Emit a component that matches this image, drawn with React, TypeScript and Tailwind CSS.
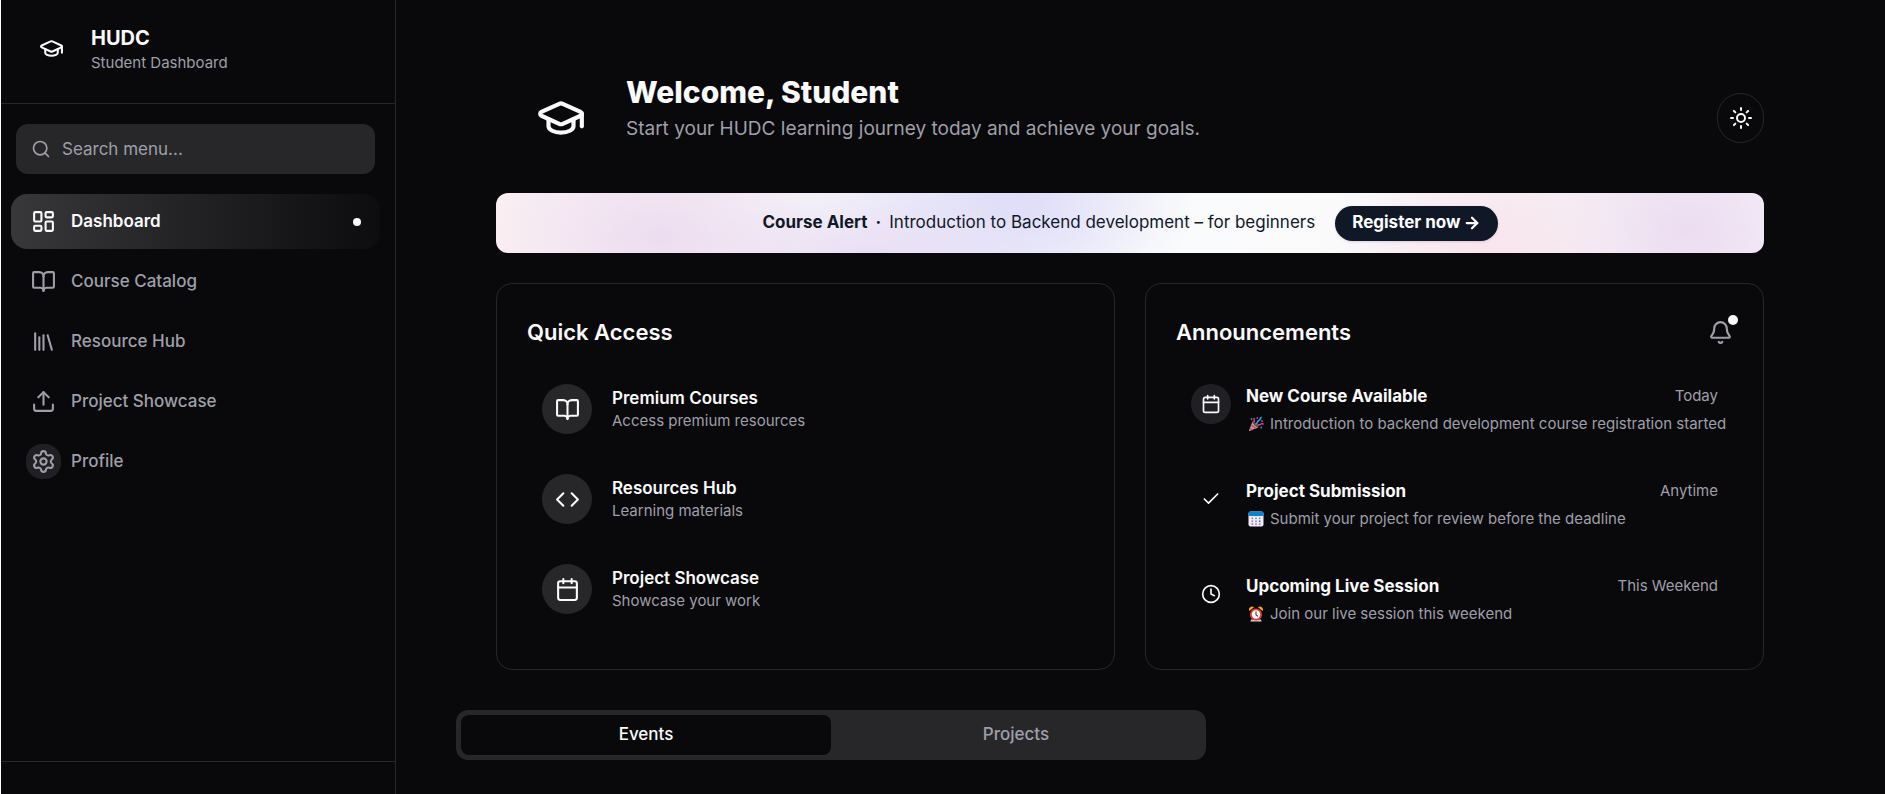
import type { ReactNode } from "react";
import {
  ArrowRight,
  Bell,
  BookOpen,
  Calendar,
  Check,
  Clock,
  Code,
  GraduationCap,
  LayoutDashboard,
  Library,
  Search,
  Settings,
  Sun,
  Upload,
} from "lucide-react";
import type { LucideIcon } from "lucide-react";

type NavItem = { label: string; icon: LucideIcon; active?: boolean; boxed?: boolean };

const navItems: NavItem[] = [
  { label: "Dashboard", icon: LayoutDashboard, active: true },
  { label: "Course Catalog", icon: BookOpen },
  { label: "Resource Hub", icon: Library },
  { label: "Project Showcase", icon: Upload },
  { label: "Profile", icon: Settings, boxed: true },
];

const quickLinks: { title: string; text: string; icon: LucideIcon }[] = [
  { title: "Premium Courses", text: "Access premium resources", icon: BookOpen },
  { title: "Resources Hub", text: "Learning materials", icon: Code },
  { title: "Project Showcase", text: "Showcase your work", icon: Calendar },
];

function PartyIcon() {
  return (
    <svg viewBox="0 0 16 16" className="size-4 shrink-0" role="img" aria-label="Party popper">
      <path d="M4.5 5.5 1 14.6c-.1.4.2.6.5.5l9-3.8z" fill="#e8a33d" />
      <path d="M3.6 8l5 4.2-1.8.8-4-3.3zM2.3 11.3l2.6 2.5-1.7.7-1.5-1.5z" fill="#8a5bd6" />
      <path d="M4.5 5.5c1-.8 6.5 4.3 6 5.8-1.7.6-6.6-4-6-5.8z" fill="#6b3d1f" />
      <path d="M8 8c2-1 1-3 2.8-3.5S12 2 13 1.5" fill="none" stroke="#1ba0e8" strokeWidth="1.8" strokeLinecap="round" />
      <path d="M9.5 9.5c1-1.5 2.3-.2 3.2-1.2s1.5-.5 2.3-.3" fill="none" stroke="#e0358c" strokeWidth="1.6" strokeLinecap="round" />
      <path d="M6 6c1-1.2-.5-2 .2-3.500" fill="none" stroke="#e0358c" strokeWidth="1.6" strokeLinecap="round" />
      <circle cx="3.5" cy="3" r=".9" fill="#1ba0e8" />
      <circle cx="9.3" cy="2" r=".9" fill="#e0358c" />
      <circle cx="14" cy="5" r=".9" fill="#e0358c" />
      <circle cx="13.2" cy="11.5" r=".9" fill="#1ba0e8" />
    </svg>
  );
}

function CalendarPageIcon() {
  return (
    <svg viewBox="0 0 16 16" className="size-4 shrink-0" role="img" aria-label="Calendar">
      <rect x=".5" y=".5" width="15" height="15" rx="2" fill="#f0eafa" />
      <path d="M2.5.5h11a2 2 0 0 1 2 2V5H.5V2.500a2 2 0 0 1 2-2z" fill="#0a84d0" />
      <g fill="#8d86a0">
        <rect x="3.5" y="6.5" width="1.6" height="1.6" />
        <rect x="7.2" y="6.5" width="1.6" height="1.6" />
        <rect x="10.9" y="6.5" width="1.6" height="1.6" />
        <rect x="3.5" y="9.5" width="1.6" height="1.6" />
        <rect x="7.2" y="9.5" width="1.6" height="1.6" />
        <rect x="3.5" y="12.3" width="1.6" height="1.6" />
        <rect x="7.2" y="12.3" width="1.6" height="1.6" />
        <rect x="10.9" y="12.3" width="1.6" height="1.6" />
      </g>
      <rect x="10.9" y="9.5" width="1.6" height="1.6" fill="#0a84d0" />
    </svg>
  );
}

function AlarmIcon() {
  return (
    <svg viewBox="0 0 16 16" className="size-4 shrink-0" role="img" aria-label="Alarm clock">
      <path d="M3 13.5h10l.6 2H2.4z" fill="#cfcbd6" />
      <path d="M1.4 5A3 3 0 0 1 6 1.3zM14.6 5A3 3 0 0 0 10 1.3z" fill="#f5a623" />
      <circle cx="8" cy="8.5" r="6" fill="#f03a2e" />
      <circle cx="8" cy="8.5" r="4.2" fill="#fff" />
      <path d="M8 5.8v2.9l1.6 1.5" fill="none" stroke="#453a55" strokeWidth="1.1" strokeLinecap="round" />
    </svg>
  );
}

type Announcement = {
  title: string;
  when: string;
  text: string;
  icon: LucideIcon;
  filled?: boolean;
  picture: ReactNode;
};

const announcements: Announcement[] = [
  {
    title: "New Course Available",
    when: "Today",
    text: "Introduction to backend development course registration started",
    icon: Calendar,
    filled: true,
    picture: <PartyIcon />,
  },
  {
    title: "Project Submission",
    when: "Anytime",
    text: "Submit your project for review before the deadline",
    icon: Check,
    picture: <CalendarPageIcon />,
  },
  {
    title: "Upcoming Live Session",
    when: "This Weekend",
    text: "Join our live session this weekend",
    icon: Clock,
    picture: <AlarmIcon />,
  },
];

function Sidebar() {
  return (
    <aside className="flex w-[396px] shrink-0 flex-col border-x border-l-white border-r-zinc-800">
      <div className="flex h-[104px] items-start border-b border-zinc-800 pt-6 pl-[38px]">
        <GraduationCap className="mt-3 size-[25px]" />
        <div className="ml-[27px]">
          <p className="text-[20px] leading-7 font-bold">HUDC</p>
          <p className="text-[15px] leading-[22px] text-zinc-400">Student Dashboard</p>
        </div>
      </div>
      <div className="mt-5 mr-5 ml-[15px]">
        <label className="flex h-[50px] items-center gap-[11px] rounded-xl bg-zinc-800 px-[15px] text-zinc-400">
          <Search className="size-5 shrink-0" />
          <input
            type="text"
            aria-label="Search menu"
            placeholder="Search menu..."
            className="w-full bg-transparent text-[17px] leading-7 outline-none placeholder:text-zinc-400"
          />
        </label>
      </div>
      <nav className="mt-5 mr-[15px] ml-[10px] flex flex-col gap-[5px]">
        {navItems.map(({ label, icon: Icon, active, boxed }) => (
          <a
            key={label}
            href="#"
            className={
              active
                ? "flex h-[55px] items-center gap-[10px] rounded-2xl bg-linear-to-r from-[#38383a] to-[#0d0d0f] px-[15px] text-[17px] font-semibold text-zinc-50"
                : "flex h-[55px] items-center gap-[10px] rounded-2xl px-[15px] text-[17px] font-medium text-zinc-400"
            }
          >
            <span
              className={
                boxed
                  ? "flex size-[35px] items-center justify-center rounded-2xl bg-zinc-800/80"
                  : "flex size-[35px] items-center justify-center"
              }
            >
              <Icon className="size-[25px]" />
            </span>
            {label}
            {active && <span className="mr-1 ml-auto size-2 rounded-full bg-zinc-50" />}
          </a>
        ))}
      </nav>
      <div className="mt-auto h-[33px] border-t border-zinc-800" />
    </aside>
  );
}

function PageHeader() {
  return (
    <header className="flex items-start justify-between">
      <div className="flex items-start">
        <GraduationCap className="mt-6 ml-10 size-[50px]" />
        <div className="ml-10">
          <h1 className="mt-1 text-[30px] leading-[38px] font-extrabold">Welcome, Student</h1>
          <p className="text-[19px] leading-9 text-zinc-400">
            Start your HUDC learning journey today and achieve your goals.
          </p>
        </div>
      </div>
      <button
        type="button"
        aria-label="Toggle theme"
        className="mt-6 flex h-[50px] w-[47px] items-center justify-center rounded-full border border-zinc-800"
      >
        <Sun className="size-6" />
      </button>
    </header>
  );
}

function AlertBanner() {
  return (
    <section className="mt-[46px] flex h-[60px] items-center justify-center rounded-xl bg-[radial-gradient(ellipse_170px_110px_at_13%_75%,#eddcf0,transparent),radial-gradient(ellipse_170px_70px_at_29%_110%,#e9def4,transparent),radial-gradient(ellipse_180px_110px_at_41%_15%,#dfddf8,transparent),radial-gradient(ellipse_150px_80px_at_78%_90%,#f9e4ed,transparent),radial-gradient(ellipse_130px_100px_at_94%_60%,#ecdcf1,transparent),linear-gradient(90deg,#faeef2,#f4f2f8_24%,#eeecfa_38%,#fafbfc_52%,#fafafb_66%,#f6eef3_80%,#f3eef8)] text-[17px] text-gray-900">
      <strong className="font-bold">Course Alert</strong>
      <span className="mx-2 font-bold">·</span>
      <span>Introduction to Backend development – for beginners</span>
      <a
        href="#"
        className="ml-5 flex h-[35px] items-center gap-[2px] rounded-full bg-gray-900 px-[17px] text-[17px] font-bold text-white shadow-sm"
      >
        Register now
        <ArrowRight className="size-[18px]" strokeWidth={3} />
      </a>
    </section>
  );
}

function QuickAccess() {
  return (
    <section className="rounded-2xl border border-zinc-800 px-[30px] pt-[30px]">
      <h2 className="text-[22px] leading-9 font-semibold">Quick Access</h2>
      <ul className="mt-[34px] flex flex-col gap-10 px-[15px]">
        {quickLinks.map(({ title, text, icon: Icon }) => (
          <li key={title}>
            <a href="#" className="flex items-center gap-5">
              <span className="flex size-[50px] items-center justify-center rounded-full bg-zinc-800">
                <Icon className="size-[25px]" />
              </span>
              <span className="flex flex-col">
                <span className="text-[17px] leading-6 font-semibold">{title}</span>
                <span className="text-[15px] leading-[22px] text-zinc-400">{text}</span>
              </span>
            </a>
          </li>
        ))}
      </ul>
    </section>
  );
}

function Announcements() {
  return (
    <section className="rounded-2xl border border-zinc-800 px-[30px] pt-[30px]">
      <div className="flex items-center justify-between">
        <h2 className="text-[22px] leading-9 font-semibold">Announcements</h2>
        <button type="button" aria-label="Notifications" className="relative text-zinc-400">
          <Bell className="size-[25px]" />
          <span className="absolute -top-[5px] -right-[5px] size-[10px] rounded-full bg-zinc-50" />
        </button>
      </div>
      <ul className="mt-[34px] flex flex-col gap-10 px-[15px]">
        {announcements.map(({ title, when, text, icon: Icon, filled, picture }) => (
          <li key={title} className="flex h-[55px] gap-[15px]">
            <span
              className={
                filled
                  ? "flex size-10 shrink-0 items-center justify-center rounded-full bg-zinc-800/80"
                  : "flex size-10 shrink-0 items-center justify-center"
              }
            >
              <Icon className="size-5" />
            </span>
            <div className="min-w-0 grow">
              <div className="flex items-center justify-between">
                <h3 className="text-[17px] leading-6 font-bold">{title}</h3>
                <span className="text-[15px] leading-6 text-zinc-400">{when}</span>
              </div>
              <p className="mt-1 flex items-center gap-[6px] pl-[2px] text-[15px] leading-6 whitespace-nowrap text-zinc-400">
                {picture}
                {text}
              </p>
            </div>
          </li>
        ))}
      </ul>
    </section>
  );
}

export default function App() {
  return (
    <div className="flex min-h-screen bg-[#09090b] font-[Inter,sans-serif] text-zinc-50">
      <Sidebar />
      <main className="flex grow flex-col pt-[69px] pr-[121px] pl-[60px]">
        <div className="flex flex-col pl-10">
          <PageHeader />
          <AlertBanner />
          <div className="mt-[30px] grid h-[387px] grid-cols-2 gap-[30px]">
            <QuickAccess />
            <Announcements />
          </div>
        </div>
        <div role="tablist" className="mt-10 flex h-[50px] w-[750px] rounded-xl bg-zinc-800 p-[5px] text-[17px] font-medium">
          <button type="button" role="tab" aria-selected="true" className="flex-1 rounded-lg bg-[#09090b]">
            Events
          </button>
          <button type="button" role="tab" aria-selected="false" className="flex-1 rounded-lg text-zinc-400">
            Projects
          </button>
        </div>
      </main>
    </div>
  );
}
